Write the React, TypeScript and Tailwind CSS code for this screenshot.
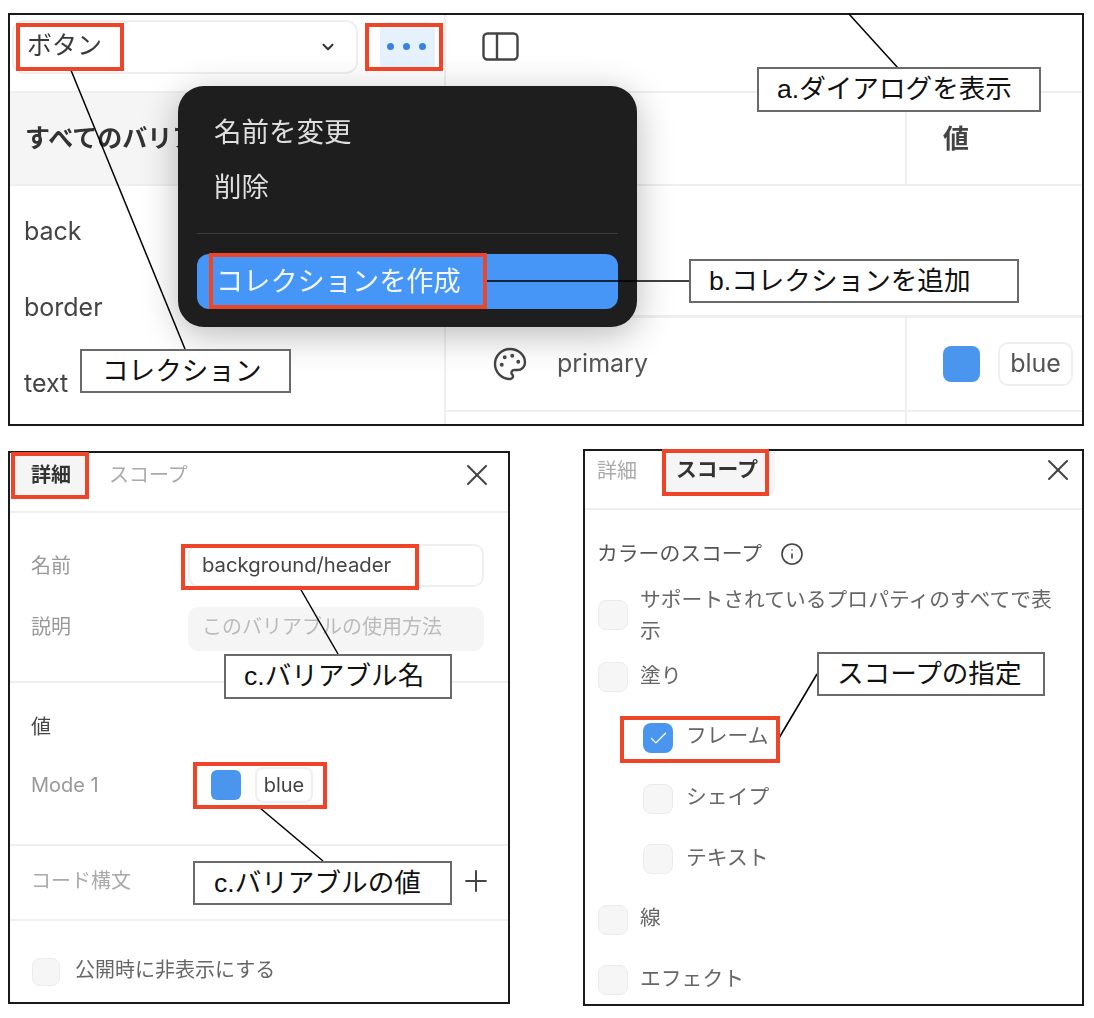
import { Check, ChevronDown, Info, Palette, Plus, X } from "lucide-react";
import type { ReactNode } from "react";

function Box({ className }: { className: string }) {
  return <div className={`absolute border-[4px] border-[#ee4529] ${className}`} />;
}

function Callout({ className, children }: { className: string; children: ReactNode }) {
  return (
    <div
      className={`absolute flex items-center border-2 border-[#6a6a6a] bg-white text-[26.6px] leading-none text-[#111] font-['Liberation_Sans','Noto_Sans_CJK_JP',sans-serif] whitespace-nowrap ${className}`}
    >
      {children}
    </div>
  );
}

function Cb({ on }: { on?: boolean }) {
  return on ? (
    <span className="flex h-[30px] w-[30px] shrink-0 items-center justify-center rounded-[8px] bg-[#4a96ef]">
      <Check size={21} strokeWidth={1.6} className="text-white" />
    </span>
  ) : (
    <span className="block h-[30px] w-[30px] shrink-0 rounded-[8px] border border-[#ebebeb] bg-[#f6f6f6]" />
  );
}

function ScopeRow({ label, sub, on }: { label: string; sub?: boolean; on?: boolean }) {
  return (
    <div className={`flex h-[60.6px] items-center ${sub ? "gap-[13px] pl-[45px]" : "gap-[12px]"}`}>
      <Cb on={on} />
      <span className="pb-[4px]">{label}</span>
    </div>
  );
}

export default function App() {
  return (
    <div className="relative h-[1018px] w-[1094px] overflow-hidden bg-white pl-[8px] pt-[13px] font-['Inter','Noto_Sans_CJK_JP',sans-serif]">
      {/* Top panel */}
      <div className="flex h-[413px] w-[1076px] overflow-hidden border-2 border-[#1a1a1a] text-[25px] text-[#444]">
        <div className="flex w-[436px] shrink-0 flex-col border-r-2 border-[#efefef] blur-[0.4px]">
          <div className="flex h-[78px] shrink-0 items-start border-b-2 border-[#efefef] pl-[2px] pt-[5px]">
            <div className="flex h-[54px] w-[346px] items-center justify-between rounded-[12px] border-2 border-[#efefef] pb-[3px] pl-[13px] pr-[19px] text-[25px] text-[#3a3a3a]">
              <span>ボタン</span>
              <ChevronDown size={18} strokeWidth={2.6} className="mt-[3px] text-[#333]" />
            </div>
            <div className="ml-[22px] mt-[2px] flex h-[49px] w-[55px] items-center justify-center gap-[9px] rounded-[8px] bg-[#e5f2fe] pr-[3px]">
              <span className="h-[7px] w-[7px] rounded-full bg-[#3a82e8]" />
              <span className="h-[7px] w-[7px] rounded-full bg-[#3a82e8]" />
              <span className="h-[7px] w-[7px] rounded-full bg-[#3a82e8]" />
            </div>
          </div>
          <div className="flex h-[93px] shrink-0 items-center border-b-2 border-[#efefef] bg-[#f5f5f5] pl-[15px] text-[25px] font-bold text-[#333] whitespace-nowrap">
            すべてのバリアブル
          </div>
          <div className="flex flex-col pl-[14px] pt-[8px]">
            <div className="flex h-[76px] items-center">back</div>
            <div className="flex h-[76px] items-center">border</div>
            <div className="flex h-[76px] items-center">text</div>
          </div>
        </div>
        <div className="flex min-w-0 flex-1 flex-col blur-[0.4px]">
          <div className="flex h-[78px] shrink-0 items-start border-b-2 border-[#efefef] pl-[36px] pt-[17px]">
            <svg width="37" height="29" viewBox="0 0 37 29" fill="none" stroke="#444" strokeWidth="2.4">
              <rect x="1.5" y="1.5" width="34" height="26" rx="4" />
              <path d="M15 1.5v26" />
            </svg>
          </div>
          <div className="flex h-[93px] shrink-0 border-b-2 border-[#efefef]">
            <div className="flex-1" />
            <div className="flex w-[177px] items-center border-l-2 border-[#efefef] pl-[36px] text-[26px] font-bold text-[#444]">
              値
            </div>
          </div>
          <div className="h-[132px] shrink-0 border-b-[3px] border-[#efefef]" />
          <div className="flex h-[94px] shrink-0 border-b-2 border-[#efefef] text-[#555]">
            <div className="flex flex-1 items-center gap-[29px] pl-[46px]">
              <Palette size={36} strokeWidth={1.6} className="text-[#444]" />
              <span>primary</span>
            </div>
            <div className="flex w-[177px] items-center gap-[18px] border-l-2 border-[#efefef] pl-[36px]">
              <span className="h-[36px] w-[37px] shrink-0 rounded-[8px] bg-[#4a96ef]" />
              <span className="flex h-[44px] w-[75px] shrink-0 items-center justify-center rounded-[10px] border-2 border-[#efefef]">
                blue
              </span>
            </div>
          </div>
          <div className="flex flex-1">
            <div className="flex-1" />
            <div className="w-[177px] border-l-2 border-[#efefef]" />
          </div>
        </div>
      </div>

      {/* Bottom row */}
      <div className="mt-[23px] flex w-[1076px] items-start justify-between text-[20px]">
        {/* Details panel */}
        <div className="mt-[2px] h-[553px] w-[502px] border-2 border-[#1a1a1a] text-[#999]">
          <div className="blur-[0.4px]">
            <div className="flex h-[60px] items-start justify-between border-b-2 border-[#efefef] pl-[2px] pr-[13px]">
              <div className="flex items-center">
                <span className="flex h-[44px] w-[78px] items-center justify-center bg-[#f5f5f5] font-bold text-[#333]">
                  詳細
                </span>
                <span className="ml-[19px] text-[#aaa]">スコープ</span>
              </div>
              <X size={36} strokeWidth={1.35} className="mt-[4px] text-[#444]" />
            </div>
            <div className="flex h-[170px] flex-col gap-[20px] border-b-2 border-[#efefef] pl-[21px] pr-[24px] pt-[31px]">
              <div className="flex items-center justify-between">
                <span>名前</span>
                <span className="flex h-[43px] w-[296px] items-center rounded-[10px] border-2 border-[#efefef] pl-[12px] text-[20.3px] text-[#444]">
                  background/header
                </span>
              </div>
              <div className="flex items-center justify-between">
                <span className="pb-[5px]">説明</span>
                <span className="flex h-[44px] w-[296px] items-center rounded-[10px] bg-[#f5f5f5] pb-[5px] pl-[14px] text-[#bbb]">
                  このバリアブルの使用方法
                </span>
              </div>
            </div>
            <div className="h-[163px] border-b-2 border-[#efefef] pl-[21px] pt-[29px]">
              <div className="text-[#444]">値</div>
              <div className="mt-[25px] flex items-center">
                <span className="w-[180px]">Mode 1</span>
                <span className="h-[30px] w-[30px] rounded-[6px] bg-[#4a96ef]" />
                <span className="ml-[14px] flex h-[36px] w-[58px] items-center justify-center rounded-[8px] border-2 border-[#efefef] text-[#444]">
                  blue
                </span>
              </div>
            </div>
            <div className="flex h-[75px] items-center justify-between border-b-2 border-[#efefef] pb-[3px] pl-[21px] pr-[15px] text-[#aaa]">
              <span>コード構文</span>
              <Plus size={34} strokeWidth={1.4} className="text-[#444]" />
            </div>
            <div className="flex items-center gap-[15px] pl-[22px] pt-[34px] text-[#666]">
              <span className="block h-[28px] w-[28px] rounded-[8px] border border-[#ebebeb] bg-[#f6f6f6]" />
              <span className="pb-[3px]">公開時に非表示にする</span>
            </div>
          </div>
        </div>

        {/* Scope panel */}
        <div className="h-[557px] w-[501px] border-2 border-[#1a1a1a] text-[20.8px] text-[#666]">
          <div className="blur-[0.4px]">
            <div className="flex h-[59px] items-start justify-between border-b-2 border-[#efefef] pl-[12px] pr-[6px]">
              <div className="flex items-center">
                <span className="pb-[5px] text-[20px] text-[#aaa]">詳細</span>
                <span className="ml-[24px] flex h-[44px] w-[114px] items-center justify-center rounded-br-[6px] bg-[#f5f5f5] pb-[6px] pr-[2px] font-bold text-[#333]">
                  スコープ
                </span>
              </div>
              <X size={36} strokeWidth={1.35} className="mt-[1px] text-[#444]" />
            </div>
            <div className="pl-[13px] pr-[20px]">
              <div className="-ml-[1px] flex items-center gap-[18px] pt-[28px] text-[#555]">
                <span>カラーのスコープ</span>
                <Info size={24} strokeWidth={1.6} className="text-[#444]" />
              </div>
              <div className="mt-[17px] flex h-[62px] items-start gap-[12px]">
                <span className="mt-[14px]">
                  <Cb />
                </span>
                <span className="-mt-[2px] leading-[31px]">
                  サポートされているプロパティのすべてで表
                  <br />示
                </span>
              </div>
              <div className="-mt-[1px]">
                <ScopeRow label="塗り" />
                <ScopeRow label="フレーム" sub on />
                <ScopeRow label="シェイプ" sub />
                <ScopeRow label="テキスト" sub />
                <ScopeRow label="線" />
                <ScopeRow label="エフェクト" />
              </div>
            </div>
          </div>
        </div>
      </div>

      {/* Context menu */}
      <div className="absolute left-[178px] top-[86px] h-[241px] w-[459px] rounded-[26px] bg-[#1e1e1e] px-[19px] pt-[27px] text-[27.5px] leading-[38px] text-[#dedede] shadow-[0_8px_36px_rgba(0,0,0,0.28)] blur-[0.3px]">
        <div className="pl-[17px]">名前を変更</div>
        <div className="mt-[17px] pl-[17px]">削除</div>
        <div className="mt-[27px] h-[1px] bg-[#3d3d3d]" />
        <div className="mt-[20px] flex h-[55px] items-center rounded-[12px] bg-[#4696f7] pl-[19px] text-[27.2px] text-[#f2f7ff]">
          コレクションを作成
        </div>
      </div>

      {/* Connector lines */}
      <svg className="absolute left-0 top-0" width="1094" height="1018" fill="none" stroke="#000" strokeWidth="1.5">
        <path d="M70.5 69L185 349" />
        <path d="M849 14L898 68" />
        <path d="M487 281H689" />
        <path d="M300.5 589L338 654" />
        <path d="M260 808L323 861" />
        <path d="M817 674L779 738" />
      </svg>

      {/* Highlight frames */}
      <Box className="left-[16px] top-[23px] h-[48px] w-[108px]" />
      <Box className="left-[365px] top-[23px] h-[48px] w-[78px]" />
      <Box className="left-[209px] top-[253px] h-[56px] w-[278px]" />
      <Box className="left-[11px] top-[452px] h-[47px] w-[78px]" />
      <Box className="left-[181px] top-[544px] h-[46px] w-[238px]" />
      <Box className="left-[193px] top-[762px] h-[47px] w-[134px]" />
      <Box className="left-[662px] top-[449px] h-[47px] w-[107px]" />
      <Box className="left-[620px] top-[716px] h-[47px] w-[160px]" />

      {/* Callouts */}
      <Callout className="left-[757px] top-[67px] h-[45px] w-[284px] pl-[18px]">a.ダイアログを表示</Callout>
      <Callout className="left-[689px] top-[259px] h-[44px] w-[330px] pl-[18px]">b.コレクションを追加</Callout>
      <Callout className="left-[80px] top-[349px] h-[44px] w-[211px] pl-[20px]">コレクション</Callout>
      <Callout className="left-[224px] top-[654px] h-[45px] w-[228px] pl-[18px]">c.バリアブル名</Callout>
      <Callout className="left-[193px] top-[861px] h-[44px] w-[259px] pl-[19px]">c.バリアブルの値</Callout>
      <Callout className="left-[817px] top-[652px] h-[44px] w-[228px] pl-[18px]">スコープの指定</Callout>
    </div>
  );
}
